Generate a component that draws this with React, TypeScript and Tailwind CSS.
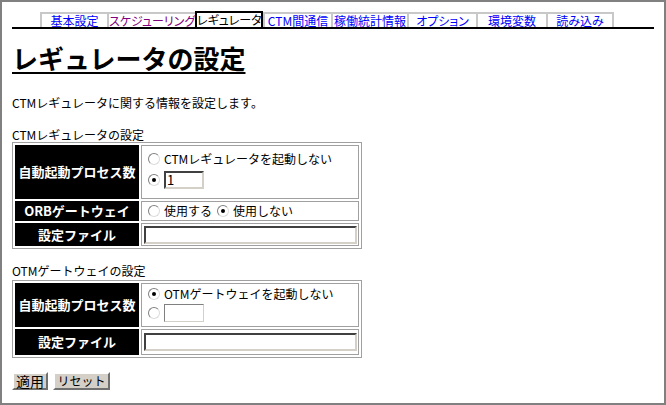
import React from "react";

// タブ定義 (幅は固定)
const TABS = [
    { label: "基本設定", width: "w-[67px]", color: "text-[#0000ff]" },
    { label: "スケジューリング", width: "w-[88px]", color: "text-[#800080]" },
    { label: "レギュレータ", width: "w-[68px]", color: "text-black", active: true },
    { label: "CTM間通信", width: "w-[68px]", color: "text-[#0000ff]" },
    { label: "稼働統計情報", width: "w-[76px]", color: "text-[#0000ff]" },
    { label: "オプション", width: "w-[69px]", color: "text-[#0000ff]" },
    { label: "環境変数", width: "w-[70px]", color: "text-[#0000ff]" },
    { label: "読み込み", width: "w-[68px]", color: "text-[#0000ff]", last: true },
];

function Radio({ checked }: { checked?: boolean }) {
    return (
        <span className="inline-flex w-[12px] h-[12px] shrink-0 items-center justify-center rounded-full bg-white border border-t-[#808080] border-l-[#808080] border-r-[#dcdcdc] border-b-[#dcdcdc]">
            {checked && <span className="w-[4px] h-[4px] rounded-full bg-black" />}
        </span>
    );
}

function TextBox({ value, className, disabled }: { value?: string; className: string; disabled?: boolean }) {
    return (
        <div
            className={
                disabled
                    ? `h-[18px] bg-white border border-t-[#808080] border-l-[#808080] border-r-[#d4d0c8] border-b-[#d4d0c8] text-[12px] leading-[16px] px-[2px] ${className}`
                    : `h-[18px] bg-white border-2 border-t-[#404040] border-l-[#404040] border-r-[#d4d0c8] border-b-[#d4d0c8] text-[13px] leading-[14px] px-[1px] ${className}`
            }
        >
            {value}
        </div>
    );
}

function Label({ text, className }: { text: string; className: string }) {
    return (
        <div className={`bg-black text-white font-bold text-[13px] flex items-center justify-center ${className}`}>
            {text}
        </div>
    );
}

function Cell({ children, className }: { children: React.ReactNode; className: string }) {
    return <div className={`border border-[#a0a0a0] ${className}`}>{children}</div>;
}

export default function App() {
    return (
        <div className="w-[666px] h-[405px] border-2 border-[#808080] bg-white px-[10px] text-black font-['Noto_Sans_CJK_JP','Noto_Sans',sans-serif]">
            {/* Tabs */}
            <div className="pt-[9px] pl-[28px] flex items-end border-b-2 border-black">
                {TABS.map((tab) =>
                    tab.active ? (
                        <div
                            key={tab.label}
                            className={`${tab.width} h-[16px] border-2 border-b-0 border-black bg-white text-[12px] leading-[14px] text-center whitespace-nowrap [font-feature-settings:'palt'] ${tab.color}`}
                        >
                            {tab.label}
                        </div>
                    ) : (
                        <div
                            key={tab.label}
                            className={`${tab.width} h-[15px] border-t-2 border-l-2 ${tab.last ? "border-r-2" : ""} border-[#c8c8c8] text-[12px] leading-[14px] text-center whitespace-nowrap [font-feature-settings:'palt'] ${tab.color}`}
                        >
                            {tab.label}
                        </div>
                    )
                )}
            </div>

            <h1 className="mt-[14px] text-[26px] leading-[30px] font-bold underline underline-offset-[3px] decoration-2">
                レギュレータの設定
            </h1>

            <p className="mt-[23px] text-[12px] leading-[14px]">CTMレギュレータに関する情報を設定します。</p>

            {/* CTMレギュレータ */}
            <p className="mt-[18px] text-[12px] leading-[14px]">CTMレギュレータの設定</p>
            <div className="w-[350px] border border-[#a0a0a0] p-[2px] grid grid-cols-[124px_218px] gap-[2px]">
                <Label text="自動起動プロセス数" className="h-[54px]" />
                <Cell className="h-[54px] pl-[6px] pt-[6px] flex flex-col">
                    <div className="flex items-center gap-[4px] h-[14px] text-[12px]">
                        <Radio />
                        <span>CTMレギュレータを起動しない</span>
                    </div>
                    <div className="flex items-center gap-[4px] mt-[5px]">
                        <Radio checked />
                        <TextBox value="1" className="w-[40px]" />
                    </div>
                </Cell>

                <Label text="ORBゲートウェイ" className="h-[20px]" />
                <Cell className="h-[20px] pl-[6px] flex items-center text-[12px]">
                    <Radio />
                    <span className="ml-[4px]">使用する</span>
                    <span className="ml-[5px]" />
                    <Radio checked />
                    <span className="ml-[4px]">使用しない</span>
                </Cell>

                <Label text="設定ファイル" className="h-[23px]" />
                <Cell className="h-[23px] pl-[2px] pr-[1px] flex items-center">
                    <TextBox className="flex-1" />
                </Cell>
            </div>

            {/* OTMゲートウェイ */}
            <p className="mt-[15px] text-[12px] leading-[14px]">OTMゲートウェイの設定</p>
            <div className="mt-[2px] w-[350px] border border-[#a0a0a0] p-[2px] grid grid-cols-[124px_218px] gap-[2px]">
                <Label text="自動起動プロセス数" className="h-[44px]" />
                <Cell className="h-[44px] pl-[6px] pt-[3px] flex flex-col">
                    <div className="flex items-center gap-[4px] h-[14px] text-[12px]">
                        <Radio checked />
                        <span>OTMゲートウェイを起動しない</span>
                    </div>
                    <div className="flex items-center gap-[4px] mt-[3px]">
                        <Radio />
                        <TextBox className="w-[40px]" disabled />
                    </div>
                </Cell>

                <Label text="設定ファイル" className="h-[26px]" />
                <Cell className="h-[26px] pl-[2px] pr-[1px] flex items-center">
                    <TextBox className="flex-1" />
                </Cell>
            </div>

            {/* Buttons */}
            <div className="mt-[14px] flex gap-[5px]">
                <button className="w-[36px] h-[18px] bg-[#d4d0c8] border-2 border-t-white border-l-white border-r-[#707070] border-b-[#707070] text-[14px] leading-[14px] flex items-center justify-center">
                    適用
                </button>
                <button className="w-[57px] h-[18px] bg-[#d4d0c8] border-2 border-t-white border-l-white border-r-[#707070] border-b-[#707070] text-[12px] leading-[14px] flex items-center justify-center">
                    リセット
                </button>
            </div>
        </div>
    );
}
